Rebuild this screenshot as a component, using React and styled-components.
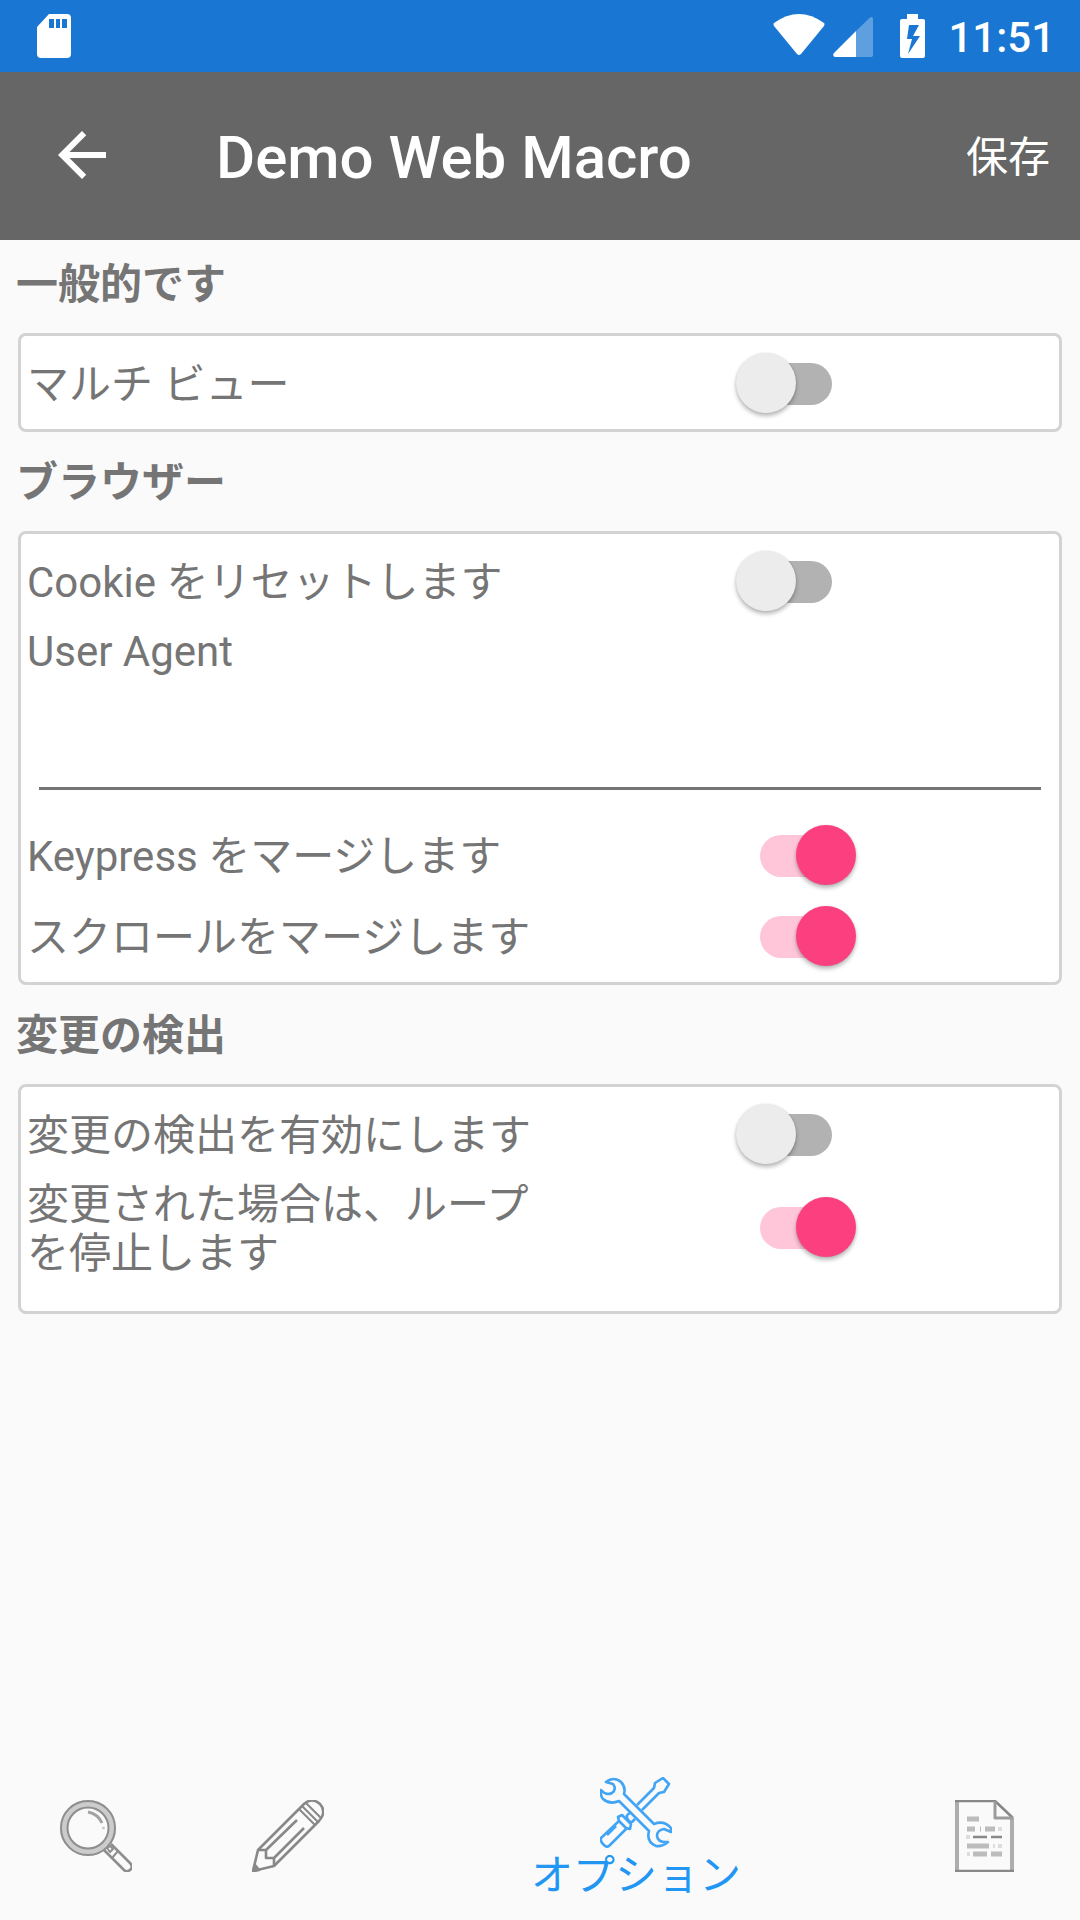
import React, { useState } from 'react';
import styled, { createGlobalStyle, css } from 'styled-components';

const GlobalStyle = createGlobalStyle`
	* {
		box-sizing: border-box;
	}

	body {
		margin: 0;
		background-color: #fafafa;
		color: #757575;
		font-family: Roboto, "Noto Sans CJK JP", sans-serif;
		font-size: 42px;
		line-height: 49px;
	}

	button, input {
		font: inherit;
		color: inherit;
	}
`

const Page = styled.div`
	display: flex;
	flex-direction: column;
	min-height: 100vh;
`

const StatusBar = styled.div`
	display: flex;
	align-items: center;
	justify-content: space-between;
	height: 72px;
	padding: 0 25px 0 36px;
	background-color: #1976d2;
	color: #fff;
	font-weight: 500;
`

const StatusGroup = styled.div`
	display: flex;
	align-items: center;
`

const StatusIcon = styled.svg`
	display: block;
	height: 44px;
	margin-right: ${props => props.$gap || 0};
`

const Clock = styled.span`
	padding-top: 2px;
`

const Toolbar = styled.header`
	display: flex;
	align-items: center;
	height: 168px;
	padding: 0 30px 2px 46px;
	background-color: #666;
	color: #fff;
`

const ToolbarButton = styled.button`
	display: flex;
	padding: 0;
	border: 0;
	background: none;
	cursor: pointer;
`

const SaveButton = styled(ToolbarButton)`
	padding-top: 4px;
`

const Title = styled.h1`
	flex: 1;
	margin: 0 0 0 98px;
	padding-top: 6px;
	font-size: 60px;
	font-weight: 500;
	line-height: 72px;
`

const Content = styled.main`
	flex: 1;
	padding: 0 18px;
`

const Section = styled.section`
	margin-bottom: 6px;
`

const SectionTitle = styled.h2`
	margin: 0 -2px;
	padding: 20px 0 24px;
	font-size: 42px;
	font-weight: 700;
	line-height: 49px;
`

const Card = styled.div`
	padding: 6px 6px ${props => props.$tall ? '31px' : '6px'};
	border: 3px solid #d3d3d3;
	border-radius: 8px;
	background-color: #fff;
`

const Row = styled.label`
	display: grid;
	grid-template-columns: 1fr 1fr;
	align-items: center;
	min-height: 81px;
	padding: 2px 0;
	cursor: pointer;
`

const RowText = styled.span`
	padding-top: 4px;
`

const Switch = styled.input`
	appearance: none;
	position: relative;
	justify-self: center;
	width: 120px;
	height: 60px;
	margin: 0 2px 0 0;
	cursor: pointer;

	&::before, &::after {
		content: '';
		position: absolute;
	}

	&::before {
		top: 10px;
		left: 24px;
		width: 72px;
		height: 42px;
		border-radius: 21px;
		background-color: #b2b2b2;
	}

	&::after {
		top: 0;
		left: 0;
		width: 60px;
		height: 60px;
		border-radius: 50%;
		background-color: #ececec;
		box-shadow: 0 3px 4px rgba(0, 0, 0, 0.28), 0 0 2px rgba(0, 0, 0, 0.1);
	}

	${props => props.checked && css`
		&::before {
			background-color: #ffc6d9;
		}

		&::after {
			left: 60px;
			background-color: #fc407f;
		}
	`}
`

const Field = styled.label`
	display: flex;
	flex-direction: column;
	gap: 2px;
	padding: 6px 0 24px;
`

const TextInput = styled.input`
	height: 112px;
	margin: 0 12px;
	padding: 24px 0 0;
	border: 0;
	border-bottom: 3px solid #757575;
	background: none;
	outline: none;
`

const TabBar = styled.nav`
	display: flex;
	height: 168px;
`

const Tab = styled.button`
	display: flex;
	flex: ${props => props.$active ? '1' : '0 0 192px'};
	flex-direction: column;
	align-items: center;
	justify-content: center;
	gap: 2px;
	padding: ${props => props.$active ? '4px 0 0' : '0'};
	border: 0;
	background: none;
	color: ${props => props.$active ? '#2196f3' : '#757575'};
	cursor: pointer;
`

const TabIcon = styled.svg`
	display: block;
	width: 72px;
	height: 72px;
	fill: none;
	stroke: currentColor;
	stroke-width: 2.6;
	stroke-linejoin: round;
	opacity: 0.85;
`

const SearchIcon = () => (
	<TabIcon viewBox="0 0 72 72">
		<circle cx="28" cy="28" r="24" stroke="#c4c4c4" strokeWidth="8" />
		<g stroke="#7c7c7c" strokeWidth="2">
			<circle cx="28" cy="28" r="27" />
			<circle cx="28" cy="28" r="20.5" />
			<path d="M44 50 L64 70 Q67 73 71 69 Q73 66 70 63 L51 44" strokeWidth="2.6" />
			<path d="M47 48 l3 -2 l3 3 l-3 3 z M52 58 l6 -7" />
		</g>
		<path d="M28 12 Q38 14 42 23" stroke="#959595" strokeWidth="3" />
		<path d="M43 27 l1 2" stroke="#bbb" />
	</TabIcon>
)

const PencilIcon = () => (
	<TabIcon viewBox="0 0 72 72">
		<path d="M6 50 L52 4 Q60 -3 68 4 Q75 12 67 21 L22 66 L1 71 Z" />
		<path d="M6 50 L14 50 L14 58 L22 58 L22 66 M14 50 L45 20 M22 58 L52 28" />
		<path d="M47 9 L63 25 M50 6 L66 22 M54 3 L69 18" strokeWidth="2" />
		<path d="M1 71 L3 65 L7 70 Z" fill="currentColor" />
	</TabIcon>
)

const ToolsIcon = () => (
	<TabIcon viewBox="0 0 72 72">
		<path d="M37 28 L54 11 L55 6 L63 1 L69 7 L64 15 L59 16 L42 33" />
		<path d="M27 38 L30 36 M35 42 L32 45 M27 38 Q26 41 29 44 Q32 46 32 44" />
		<path d="M18 40 L22 38 L31 47 L30 52 L26 51 L19 44 Z" />
		<path d="M19 44 L1 61 Q0 64 3 67 Q6 71 9 69 L27 51 M16 49 L7 58" />
		<path d="M6 5 Q14 -1 21 5 Q26 10 24 17 L54 47 Q64 43 71 51 L71 55 L64 52 Q57 53 57 59 Q58 66 68 65 Q62 70 56 69 Q46 65 49 54 L19 24 Q10 28 3 22 Q0 18 1 13 Q6 19 12 16 Q17 12 13 7 Z" />
	</TabIcon>
)

const DocumentIcon = () => (
	<TabIcon viewBox="0 0 72 72">
		<path d="M9 1 V71 M64 18 V71" stroke="#a0a0a0" strokeWidth="4" />
		<path d="M7 1 H47 L65 18 M7 71 H66" />
		<path d="M47 1 V18 H65" stroke="#8c8c8c" strokeWidth="3" />
		<path d="M19 19 H31 M19 29 H27 M32 29 H33 M37 29 H47 M19 46 H41 M25 54 H39 M43 54 H54" stroke="#b2b2b2" strokeWidth="5" />
		<path d="M50 29 H54 M45 46 H47 M50 46 H54 M19 54 H22 M18 37 H22" stroke="#d8d8d8" strokeWidth="4" />
		<path d="M25 37 H39 M43 37 H54" />
	</TabIcon>
)

const sections = [
	{
		title: '一般的です',
		rows: [{ id: 'multiView', label: 'マルチ ビュー' }]
	},
	{
		title: 'ブラウザー',
		rows: [
			{ id: 'resetCookie', label: 'Cookie をリセットします' },
			{ id: 'userAgent', label: 'User Agent', text: true },
			{ id: 'mergeKeypress', label: 'Keypress をマージします' },
			{ id: 'mergeScroll', label: 'スクロールをマージします' }
		]
	},
	{
		title: '変更の検出',
		tall: true,
		rows: [
			{ id: 'detectChange', label: '変更の検出を有効にします' },
			{ id: 'stopLoop', label: '変更された場合は、ループを停止します' }
		]
	}
];

const tabs = [
	{ id: 'search', name: '検索', icon: SearchIcon },
	{ id: 'edit', name: '編集', icon: PencilIcon },
	{ id: 'options', name: 'オプション', icon: ToolsIcon },
	{ id: 'log', name: 'ログ', icon: DocumentIcon }
];

const App = () => {
	const [activeTab, setActiveTab] = useState('options');
	const [values, setValues] = useState({
		multiView: false,
		resetCookie: false,
		userAgent: '',
		mergeKeypress: true,
		mergeScroll: true,
		detectChange: false,
		stopLoop: true
	});

	const setValue = (id, value) => setValues({ ...values, [id]: value });

	return (
		<Page>
			<GlobalStyle />
			<StatusBar>
				<StatusIcon viewBox="0 0 36 44" width="36">
					<path fill="#fff" fillRule="evenodd" d="M13 0 H31 Q35 0 35 4 V40 Q35 44 31 44 H5 Q1 44 1 40 V13 Z M13 5 V14 H18 V5 Z M20 5 V14 H24 V5 Z M26 5 V14 H31 V5 Z" />
				</StatusIcon>
				<StatusGroup>
					<StatusIcon viewBox="0 0 52 44" width="52" $gap="8px">
						<path fill="#fff" d="M1 9 Q26 -9 51 9 Q52 10 51 12 L28 40 Q26 42 24 40 L1 12 Q0 10 1 9 Z" />
					</StatusIcon>
					<StatusIcon viewBox="0 0 40 44" width="40" $gap="27px">
						<path fill="#fff" fillOpacity="0.3" d="M23 17 L37 3.5 Q40 2 40 5 V41 Q40 43 38 43 H23 Z" />
						<path fill="#fff" d="M23 17 V43 H2 Q-1 42 1 39 Z" />
					</StatusIcon>
					<StatusIcon viewBox="0 0 25 44" width="25" $gap="23px">
						<path fill="#fff" fillRule="evenodd" d="M7 0 H18 V5 H23 Q25 5 25 7 V42 Q25 44 23 44 H2 Q0 44 0 42 V7 Q0 5 2 5 H7 Z M9 11 L7 25 H12 L8 40 L20 22 H13 L19 11 Z" />
					</StatusIcon>
					<Clock>11:51</Clock>
				</StatusGroup>
			</StatusBar>
			<Toolbar>
				<ToolbarButton aria-label="戻る">
					<svg width="72" height="72" viewBox="0 0 24 24" fill="#fff">
						<path d="M20 11H7.83l5.59-5.59L12 4l-8 8 8 8 1.41-1.41L7.83 13H20v-2z" />
					</svg>
				</ToolbarButton>
				<Title>Demo Web Macro</Title>
				<SaveButton>保存</SaveButton>
			</Toolbar>
			<Content>
				{sections.map(section => (
					<Section key={section.title}>
						<SectionTitle>{section.title}</SectionTitle>
						<Card $tall={section.tall}>
							{section.rows.map(row => row.text ? (
								<Field key={row.id}>
									{row.label}
									<TextInput
										type="text"
										value={values[row.id]}
										onChange={e => setValue(row.id, e.target.value)}
									/>
								</Field>
							) : (
								<Row key={row.id}>
									<RowText>{row.label}</RowText>
									<Switch
										type="checkbox"
										checked={values[row.id]}
										onChange={e => setValue(row.id, e.target.checked)}
									/>
								</Row>
							))}
						</Card>
					</Section>
				))}
			</Content>
			<TabBar>
				{tabs.map(tab => {
					const Icon = tab.icon;
					const active = tab.id === activeTab;
					return (
						<Tab
							key={tab.id}
							$active={active}
							aria-label={tab.name}
							onClick={() => setActiveTab(tab.id)}>
							<Icon />
							{active ? <span>{tab.name}</span> : null}
						</Tab>
					);
				})}
			</TabBar>
		</Page>
	);
}

export default App;
